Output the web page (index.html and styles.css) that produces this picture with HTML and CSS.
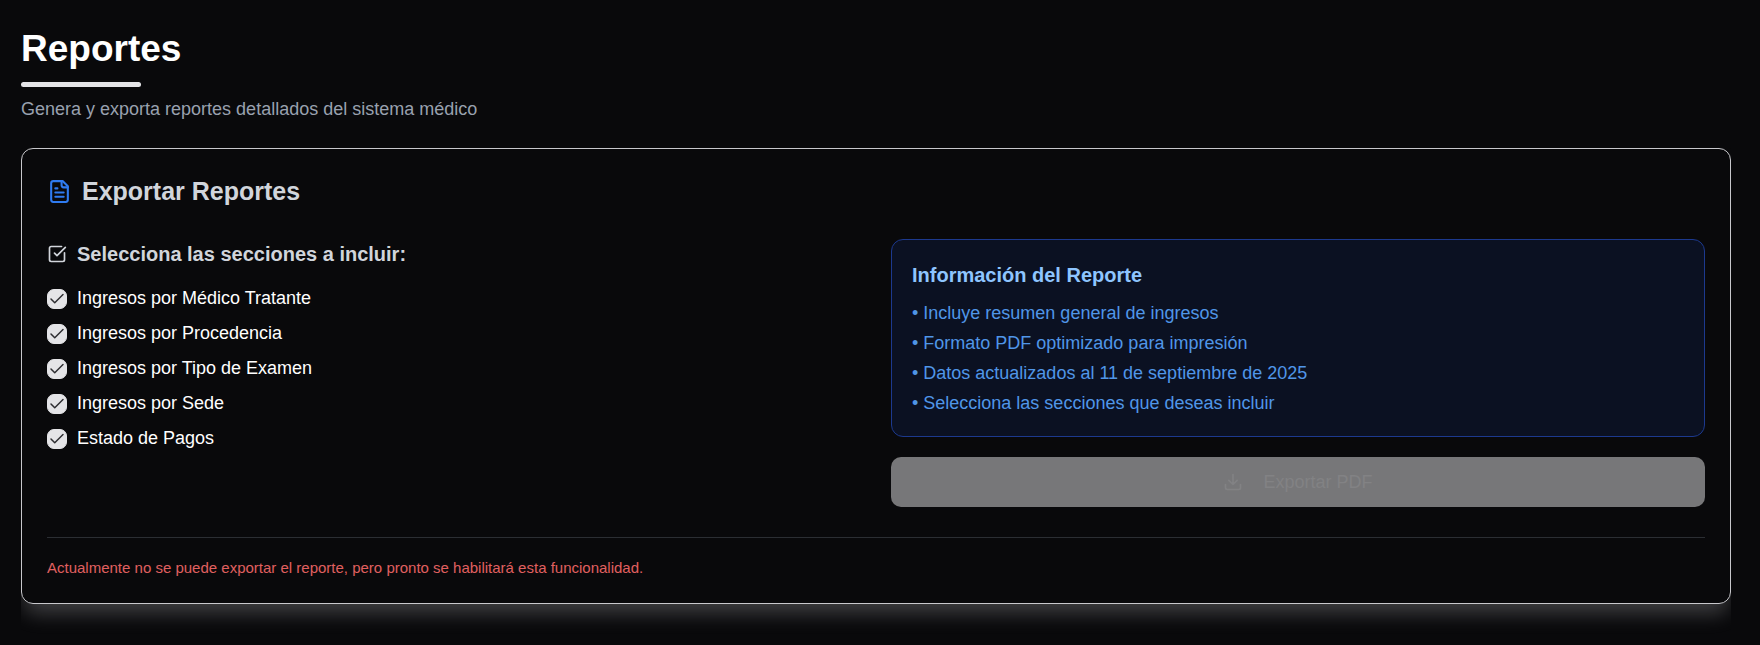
FILE: index.html
```html
<!DOCTYPE html>
<html lang="es">
<head>
    <meta charset="UTF-8">
    <meta name="viewport" content="width=device-width, initial-scale=1.0">
    <title>Reportes</title>
    <link rel="stylesheet" href="styles.css">
</head>
<body>

<main class="page">
    <header class="page-header">
        <h1 class="page-title">Reportes</h1>
        <div class="title-bar"></div>
        <p class="page-subtitle">Genera y exporta reportes detallados del sistema médico</p>
    </header>

    <section class="card">
        <h2 class="card-title">
            <svg class="icon icon-file" viewBox="0 0 24 24">
                <path d="M15 2H6a2 2 0 0 0-2 2v16a2 2 0 0 0 2 2h12a2 2 0 0 0 2-2V7Z"/>
                <path d="M14 2v4a2 2 0 0 0 2 2h4"/>
                <path d="M10 9H8M16 13H8M16 17H8"/>
            </svg>
            Exportar Reportes
        </h2>

        <div class="columns">
            <!-- Report sections -->
            <fieldset class="sections">
                <legend class="sections-title">
                    <svg class="icon icon-small" viewBox="0 0 24 24">
                        <path d="M21 10.5V19a2 2 0 0 1-2 2H5a2 2 0 0 1-2-2V5a2 2 0 0 1 2-2h12.5"/>
                        <path d="m9 11 3 3L22 4"/>
                    </svg>
                    Selecciona las secciones a incluir:
                </legend>

                <div class="option">
                    <span class="check">
                        <input type="checkbox" id="medico" checked>
                        <svg class="icon tick" viewBox="0 0 24 24"><path d="M20 6 9 17l-5-5"/></svg>
                    </span>
                    <label for="medico">Ingresos por Médico Tratante</label>
                </div>
                <div class="option">
                    <span class="check">
                        <input type="checkbox" id="procedencia" checked>
                        <svg class="icon tick" viewBox="0 0 24 24"><path d="M20 6 9 17l-5-5"/></svg>
                    </span>
                    <label for="procedencia">Ingresos por Procedencia</label>
                </div>
                <div class="option">
                    <span class="check">
                        <input type="checkbox" id="examen" checked>
                        <svg class="icon tick" viewBox="0 0 24 24"><path d="M20 6 9 17l-5-5"/></svg>
                    </span>
                    <label for="examen">Ingresos por Tipo de Examen</label>
                </div>
                <div class="option">
                    <span class="check">
                        <input type="checkbox" id="sede" checked>
                        <svg class="icon tick" viewBox="0 0 24 24"><path d="M20 6 9 17l-5-5"/></svg>
                    </span>
                    <label for="sede">Ingresos por Sede</label>
                </div>
                <div class="option">
                    <span class="check">
                        <input type="checkbox" id="pagos" checked>
                        <svg class="icon tick" viewBox="0 0 24 24"><path d="M20 6 9 17l-5-5"/></svg>
                    </span>
                    <label for="pagos">Estado de Pagos</label>
                </div>
            </fieldset>

            <!-- Report info and export -->
            <div class="side">
                <div class="info">
                    <h3 class="info-title">Información del Reporte</h3>
                    <ul class="info-list">
                        <li>• Incluye resumen general de ingresos</li>
                        <li>• Formato PDF optimizado para impresión</li>
                        <li>• Datos actualizados al 11 de septiembre de 2025</li>
                        <li>• Selecciona las secciones que deseas incluir</li>
                    </ul>
                </div>
                <button class="export-button" type="button" disabled>
                    <svg class="icon icon-small" viewBox="0 0 24 24">
                        <path d="M21 15v4a2 2 0 0 1-2 2H5a2 2 0 0 1-2-2v-4"/>
                        <path d="m7 10 5 5 5-5M12 15V3"/>
                    </svg>
                    Exportar PDF
                </button>
            </div>
        </div>

        <p class="notice">Actualmente no se puede exportar el reporte, pero pronto se habilitará esta funcionalidad.</p>
    </section>
</main>

</body>
</html>
```

FILE: styles.css
```css
:root {
    --background: #09090b;
    --light: #e4e4e7;
    --heading: #d1d5db;
    --blue: #2f7bf0;
}

* {
    box-sizing: border-box;
}

body {
    margin: 0;
    background-color: var(--background);
    color: white;
    font-family: "Liberation Sans", Arial, sans-serif;
    font-size: 18px;
    line-height: 30px;
}

h1, h2, h3, p, ul {
    margin: 0;
    padding: 0;
}

.page {
    padding: 25px 29px 40px 21px;
}

.page-title {
    font-size: 37px;
    line-height: 48px;
}

.title-bar {
    width: 120px;
    height: 5px;
    margin: 9px 0;
    border-radius: 3px;
    background-color: var(--light);
}

.page-subtitle {
    line-height: 26px;
    color: #99a1af;
}

.card {
    margin-top: 26px;
    padding: 24px 25px 20px;
    border: 1px solid #c8c8cc;
    border-radius: 12px;
    box-shadow: 0 13px 20px -4px rgba(228, 228, 231, 0.25);
    clip-path: inset(0 0 -40px 0);
}

.icon {
    fill: none;
    stroke: currentColor;
    stroke-width: 2;
    stroke-linecap: round;
    stroke-linejoin: round;
    flex-shrink: 0;
}

.icon-file {
    width: 25px;
    height: 25px;
    color: var(--blue);
}

.icon-small {
    width: 20px;
    height: 20px;
}

.card-title {
    display: flex;
    align-items: center;
    gap: 10px;
    font-size: 25px;
    line-height: 36px;
    color: var(--heading);
}

.columns {
    display: grid;
    grid-template-columns: 1fr 1fr;
    gap: 30px;
    margin-top: 30px;
}

/* Checkbox list */
.sections {
    min-width: 0;
    margin: 0;
    padding: 0;
    border: none;
}

.sections-title {
    display: flex;
    align-items: center;
    gap: 10px;
    margin-bottom: 17px;
    padding: 0;
    font-size: 20px;
    font-weight: bold;
    color: var(--heading);
}

.option {
    display: flex;
    align-items: center;
    gap: 10px;
    margin-bottom: 10px;
    line-height: 25px;
}

.check {
    display: grid;
    place-items: center;
}

.check input,
.check .tick {
    grid-area: 1 / 1;
}

.check input {
    appearance: none;
    width: 20px;
    height: 20px;
    margin: 0;
    border: 1px solid var(--light);
    border-radius: 7px;
    cursor: pointer;
}

.check input:checked {
    background-color: var(--light);
}

.tick {
    width: 18px;
    height: 18px;
    color: #2e2e32;
    pointer-events: none;
    visibility: hidden;
}

.check input:checked + .tick {
    visibility: visible;
}

/* Info panel */
.side {
    display: flex;
    flex-direction: column;
    gap: 20px;
}

.info {
    padding: 20px 20px 18px;
    border: 1px solid #1c398e;
    border-radius: 12px;
    background-color: #0b1122;
}

.info-title {
    margin-bottom: 8px;
    font-size: 20px;
    color: #8ec5ff;
}

.info-list {
    list-style: none;
    color: #5096e8;
}

.export-button {
    display: flex;
    align-items: center;
    justify-content: center;
    gap: 20px;
    height: 50px;
    border: none;
    border-radius: 10px;
    background-color: #777779;
    color: #828284;
    font-family: inherit;
    font-size: 18px;
}

.notice {
    margin-top: 30px;
    padding-top: 15px;
    border-top: 1px solid #2b2e33;
    font-size: 15px;
    color: #e06060;
}
```
